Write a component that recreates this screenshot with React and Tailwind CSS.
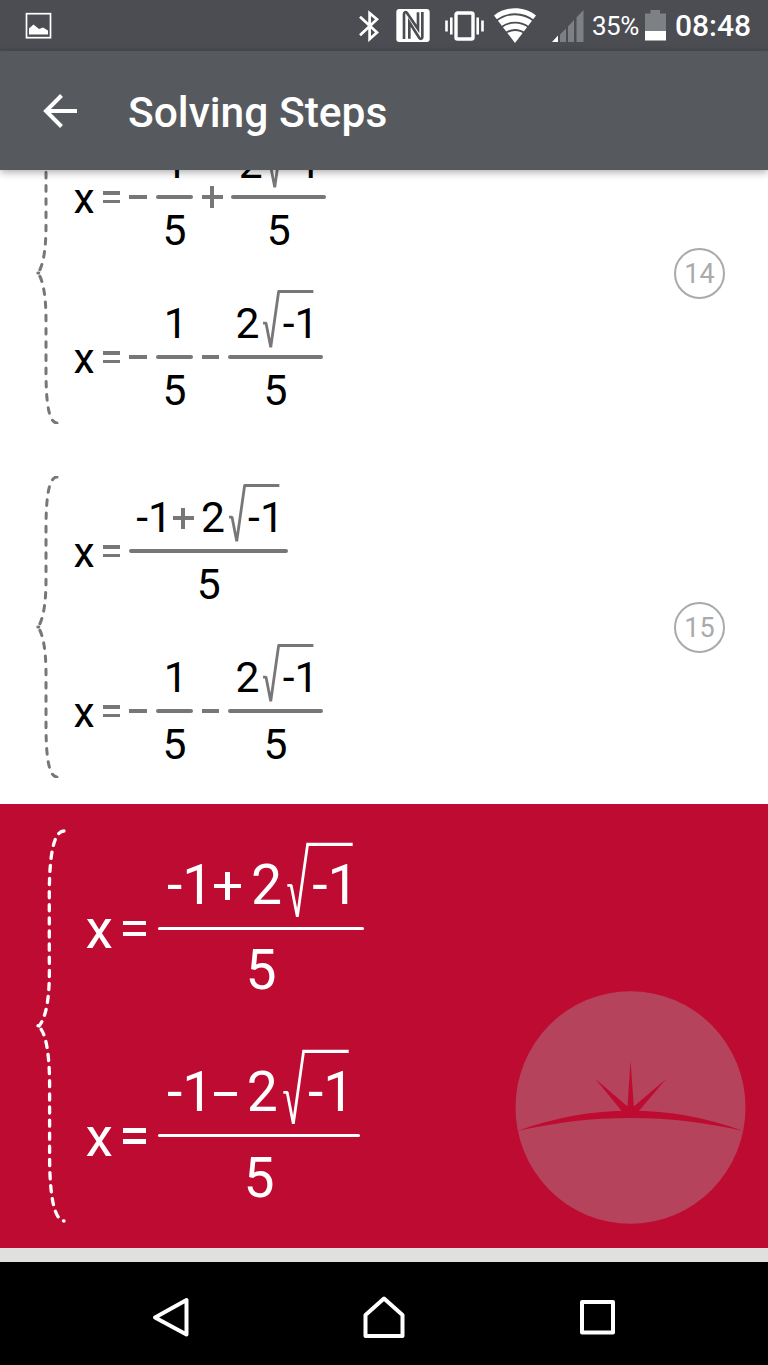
function StatusBar() {
  return (
    <div className="flex h-[51px] items-center bg-[#4b4d53] text-white">
      <svg className="ml-[25px] h-[27px] w-[27px]" viewBox="0 0 27 27" fill="none">
        <rect x="1.5" y="1.7" width="24" height="24" stroke="currentColor" strokeWidth="1.7" />
        <path d="M4 22.5v-6l4.5-4 5.5 4.5 4-1.5 5 3v4z" fill="currentColor" />
      </svg>

      <svg className="ml-[306.5px] h-8 w-5" viewBox="0 0 20 32" fill="none">
        <path
          d="M1 6.7l17 15.8-7.4 6.6V3.2L18 9.3 1 25.2"
          stroke="currentColor"
          strokeWidth="2.7"
        />
      </svg>

      <svg className="ml-[17.5px] h-[33px] w-[34px]" viewBox="0 0 102 99" fill="none">
        <rect x="1" width="100" height="99" rx="9" fill="currentColor" />
        <path d="M24 90V15C24 9 30 8 33 12L66 60V10" stroke="#4b4d53" strokeWidth="8" />
        <path d="M79 9V84C79 90 73 91 70 87L40 40V89" stroke="#4b4d53" strokeWidth="8" />
      </svg>

      <svg className="ml-[15px] h-[30px] w-[39px]" viewBox="0 0 39 30" fill="none">
        <rect x="11" y="2" width="17" height="26" rx="1.5" stroke="currentColor" strokeWidth="3.4" />
        <path d="M1.5 9.5v11M6.3 6.5v17M32.7 6.5v17M37.5 9.5v11" stroke="currentColor" strokeWidth="2.6" />
      </svg>

      <svg className="ml-[10px] h-[35px] w-[42px]" viewBox="0 0 42 35">
        <path d="M0 7.5C12-2.2 30-2.2 42 7.5L21 35z" fill="currentColor" />
        <g fill="none" stroke="#4b4d53" strokeWidth="1.9">
          <path d="M2 13c11-9 27-9 38 0" />
          <path d="M7 19.5c8-6.5 20-6.5 28 0" />
          <path d="M11 25.5c6-4.7 14-4.7 20 0" />
        </g>
      </svg>

      <svg className="ml-[16px] h-8 w-8" viewBox="0 0 32 32">
        <path
          d="M8 24.5L14 18.5V32H8zM16 16.5L22 10V32H16zM24.5 7.5L31.5 0V32H24.5z"
          fill="#7d8184"
        />
        <path d="M0 32l6-6.5V32z" fill="currentColor" />
      </svg>

      <span className="ml-2 w-[49px] pt-px text-[26px] leading-none tracking-[-0.5px]">35%</span>

      <svg className="ml-[4px] h-8 w-[21px]" viewBox="0 0 21 32">
        <path d="M0 3.5h5.5V0h9.5v3.5H21V22H0z" fill="#7d8184" />
        <path d="M0 21h21v9.5H0z" fill="currentColor" />
      </svg>

      <span className="ml-[9px] pt-px text-[30px] leading-none font-medium">08:48</span>
    </div>
  )
}

function AppBar() {
  return (
    <div className="relative z-10 flex h-[119px] items-center bg-[#565a5e] text-white shadow-[0_2px_8px_rgba(0,0,0,0.35)]">
      <svg className="ml-[43px] h-[34px] w-[35px]" viewBox="0 0 35 34" fill="none">
        <path d="M34 17H3M18.5 1.5L3 17l15.5 15.5" stroke="currentColor" strokeWidth="4" />
      </svg>
      <h1 className="ml-[50px] pt-[5px] text-[42.5px] leading-none font-medium">Solving Steps</h1>
    </div>
  )
}

// All math pieces are sized in em so the same parts serve both text sizes.
function Equation({ children }) {
  return (
    <div className="flex items-center leading-[1.5]">
      <span className="w-[0.495em] pt-[0.09em]">x</span>
      <span className="mr-[0.21em] ml-[0.19em] flex w-[0.41em] flex-col gap-[0.12em] pt-[0.01em] text-(--op)">
        <i className="h-[0.08em] bg-current" />
        <i className="h-[0.08em] bg-current" />
      </span>
      {children}
    </div>
  )
}

function Minus({ className = '' }) {
  return <i className={`h-[0.08em] w-[0.415em] bg-(--op) ${className}`} />
}

function Plus({ className = '' }) {
  return (
    <span className={`grid h-[0.5em] w-[0.49em] place-items-center ${className}`}>
      <i className="col-start-1 row-start-1 h-[0.085em] w-full bg-(--op)" />
      <i className="col-start-1 row-start-1 h-full w-[0.085em] bg-(--op)" />
    </span>
  )
}

function Fraction({ top, bottom, className = '' }) {
  return (
    <div className={`flex flex-col items-center ${className}`}>
      <div className="mt-[0.02em] -mb-[0.02em] flex items-center pr-[0.105em] pl-[0.17em]">{top}</div>
      <div className="h-[3.3px] w-full rounded-full bg-(--op)" />
      <div className="mt-[0.01em] -mb-[0.01em]">{bottom}</div>
    </div>
  )
}

function Root({ children }) {
  return (
    <span className="relative ml-[0.07em] pl-[0.475em]">
      <svg
        className="absolute top-0 left-0 h-[1.483em] w-[1.3em] overflow-visible text-(--op)"
        viewBox="0 0 56 64"
        fill="none"
        stroke="currentColor"
      >
        <path
          d="M1 31.5H4L8.8 56 16.8 -0.5"
          strokeWidth="2.8"
          strokeLinejoin="bevel"
          vectorEffect="non-scaling-stroke"
        />
        <path d="M15.8 -0.5H52" strokeWidth="3.2" vectorEffect="non-scaling-stroke" />
      </svg>
      {children}
    </span>
  )
}

function Brace() {
  return (
    <svg
      className="ml-[35px] h-[302px] w-6 shrink-0"
      viewBox="0 0 24 302"
      fill="none"
      stroke="#777"
      strokeWidth="3"
      strokeLinecap="round"
    >
      <path
        d="M22 1C13 1 11 26 11 52V104C11 128 8 144 3 151C8 158 11 174 11 198V250C11 276 13 301 22 301"
        pathLength="302.2"
        strokeDasharray="5.5 7.4"
      />
      <path d="M2.8 151h1" />
    </svg>
  )
}

function SplitTerms({ sign }) {
  return (
    <Equation>
      <Minus />
      <Fraction className="ml-[0.22em] w-[0.86em]" top="1" bottom="5" />
      {sign === '+' ? <Plus className="mx-[0.21em]" /> : <Minus className="mx-[0.21em]" />}
      <Fraction top={<>2<Root>-1</Root></>} bottom="5" />
    </Equation>
  )
}

function JoinedTerms({ sign }) {
  return (
    <Equation>
      <Fraction
        top={
          <>
            -1
            {sign === '+' ? (
              <Plus className="mr-[0.175em] ml-[0.015em]" />
            ) : (
              <Minus className="mr-[0.175em] ml-[0.015em]" />
            )}
            2<Root>-1</Root>
          </>
        }
        bottom="5"
      />
    </Equation>
  )
}

function Step({ number, children }) {
  return (
    <section className="flex h-[354px] shrink-0 items-center text-[42.6px] [--op:#777]">
      <Brace />
      <div className="mt-2 ml-[14.5px] flex flex-col gap-[29px]">{children}</div>
      <span className="mr-[43px] ml-auto flex h-[51px] w-[51px] items-center justify-center rounded-full border-2 border-[#aaa] pt-[3px] text-[27px] leading-none text-[#aaa]">
        {number}
      </span>
    </section>
  )
}

function SunriseButton() {
  return (
    <button className="absolute right-[22px] bottom-[24px]">
      <svg className="block h-[233px] w-[231px]" viewBox="0 0 231 233">
        <ellipse cx="115.5" cy="116.5" rx="115" ry="116.3" fill="#b5435b" />
        <path
          d="M2.5 140C75 113 156 113 228 140C156 122.5 75 122.5 2.5 140z"
          fill="#be0b31"
        />
        <path
          d="M115.5 69.5L118.8 115.5 151 88 123 121H107.5L80.5 88 112.5 115.5z"
          fill="#be0b31"
        />
      </svg>
    </button>
  )
}

function Solution() {
  return (
    <section className="relative flex h-[444px] items-center bg-[#be0b31] text-[55.3px] text-white [--op:#fff]">
      <svg className="ml-[35px] h-[392px] w-[31px] overflow-visible" viewBox="0 0 31 392" fill="none">
        <path
          d="M29 1C18 1 14.5 28 14.3 62V130C15 165 12 186 4 196L2 195.5C10 199 15 220 14.6 262V330C15 370 20 390 29 391"
          stroke="#fff"
          strokeWidth="3.3"
          strokeLinecap="round"
          pathLength="397.3"
          strokeDasharray="6 6.8"
        />
      </svg>
      <div className="mt-3 ml-[19.5px] flex flex-col gap-[38.5px]">
        <JoinedTerms sign="+" />
        <JoinedTerms sign="-" />
      </div>
      <SunriseButton />
    </section>
  )
}

function NavBar() {
  return (
    <nav className="flex h-[103px] items-center bg-black pt-[6px] text-white">
      <svg className="ml-[152px] h-[42px] w-[38px]" viewBox="0 0 38 42" fill="none">
        <path d="M34.5 4v34.5L3 21.5z" stroke="currentColor" strokeWidth="4" strokeLinejoin="round" />
      </svg>
      <svg className="ml-[172px] h-[44px] w-[44px]" viewBox="0 0 44 44" fill="none">
        <path d="M3.5 20L22 3.5 40.5 20V41h-37z" stroke="currentColor" strokeWidth="4" strokeLinejoin="round" />
      </svg>
      <svg className="ml-[173px] h-[36px] w-[37px]" viewBox="0 0 37 36" fill="none">
        <rect x="3" y="3" width="31" height="30.5" stroke="currentColor" strokeWidth="4" strokeLinejoin="round" />
      </svg>
    </nav>
  )
}

export default function App() {
  return (
    <div className="flex h-[1365px] w-[768px] flex-col overflow-hidden bg-white font-[Roboto,sans-serif] text-black">
      <StatusBar />
      <AppBar />
      <main className="flex h-[634px] flex-col justify-end overflow-hidden">
        <Step number={14}>
          <SplitTerms sign="+" />
          <SplitTerms sign="-" />
        </Step>
        <Step number={15}>
          <JoinedTerms sign="+" />
          <SplitTerms sign="-" />
        </Step>
      </main>
      <Solution />
      <div className="h-[14px] bg-[#e0e0df]" />
      <NavBar />
    </div>
  )
}
